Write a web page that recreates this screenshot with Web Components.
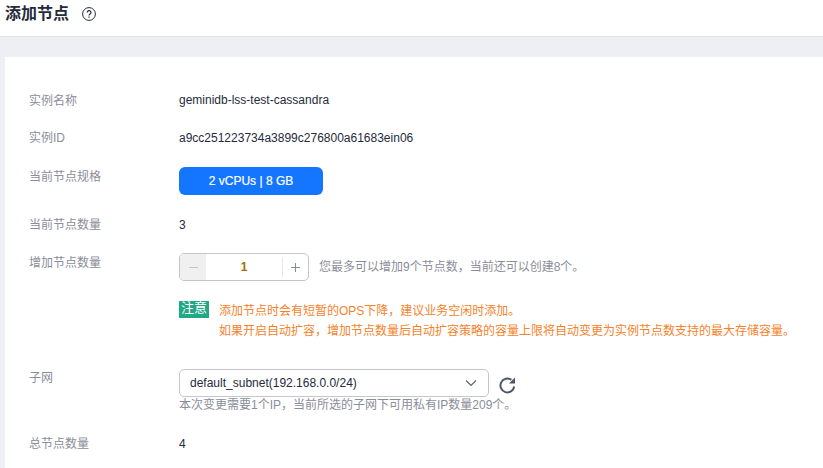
<!DOCTYPE html>
<html>
<head>
<meta charset="utf-8">
<style>
  html, body { margin: 0; height: 468px; overflow: hidden; background: #eeeff4; }
  body { font: 12px "Liberation Sans", "Noto Sans CJK SC", sans-serif; color: #252b3a; }
</style>
</head>
<body>
<page-header>添加节点</page-header>
<form-card>
  <form-row label="实例名称" style="--row-h:37px">geminidb-lss-test-cassandra</form-row>
  <form-row label="实例ID" style="--row-h:38px;--value-top:1px">a9cc251223734a3899c276800a61683ein06</form-row>
  <form-row label="当前节点规格" style="--row-h:49px;--label-top:2px"><spec-pill>2 vCPUs | 8 GB</spec-pill></form-row>
  <form-row label="当前节点数量" style="--row-h:37px;--value-top:1px">3</form-row>
  <form-row label="增加节点数量" style="--row-h:49px;--label-top:2px">
    <step-input value="1"></step-input>
    <span slot="after">您最多可以增加9个节点数，当前还可以创建8个。</span>
  </form-row>
  <notice-box tag="注意">
    <div>添加节点时会有短暂的OPS下降，建议业务空闲时添加。</div>
    <div>如果开启自动扩容，增加节点数量后自动扩容策略的容量上限将自动变更为实例节点数支持的最大存储容量。</div>
  </notice-box>
  <form-row label="子网" style="--row-h:66px">
    <subnet-select value="default_subnet(192.168.0.0/24)" hint="本次变更需要1个IP，当前所选的子网下可用私有IP数量209个。"></subnet-select>
  </form-row>
  <form-row label="总节点数量" style="--row-h:20px;--value-top:1px">4</form-row>
</form-card>
<script>
class PageHeader extends HTMLElement {
  constructor() {
    super();
    this.attachShadow({ mode: 'open' }).innerHTML = `
      <style>
        :host { display: flex; align-items: center; height: 37px; box-sizing: border-box; padding: 0 0 9px 5px; background: #fff; border-bottom: 1px solid #e3e3e6; }
        h1 { margin: 0; font-size: 16px; font-weight: bold; color: #252b3a; line-height: 26px; }
        svg { margin-left: 13px; }
      </style>
      <h1><slot></slot></h1>
      <svg width="14" height="14" viewBox="0 0 14 14" fill="none" stroke="#252b3a">
        <circle cx="7" cy="7" r="6.4"/>
        <path d="M5.2 5.6a1.9 1.9 0 1 1 2.9 1.5c-.7.4-1.1.8-1.1 1.5" stroke-width="1.2"/>
        <path d="M7 9.6v1.2" stroke-width="1.2"/>
      </svg>`;
  }
}
customElements.define('page-header', PageHeader);

class FormCard extends HTMLElement {
  constructor() {
    super();
    this.attachShadow({ mode: 'open' }).innerHTML = `
      <style>
        :host { display: block; margin: 20px 0 0 5px; padding: 33px 0 0 24px; background: #fff; height: 411px; box-sizing: border-box; }
      </style>
      <slot></slot>`;
  }
}
customElements.define('form-card', FormCard);

class FormRow extends HTMLElement {
  constructor() {
    super();
    this.attachShadow({ mode: 'open' }).innerHTML = `
      <style>
        :host { display: flex; height: var(--row-h, 40px); line-height: 20px; }
        .label { width: 150px; flex: none; color: #8a8e99; padding-top: var(--label-top, 1px); }
        .value { display: flex; align-items: flex-start; color: #252b3a; padding-top: var(--value-top, 0); }
        .after { color: #8a8e99; margin-left: 10px; line-height: 28px; margin-top: 2px; }
      </style>
      <div class="label"></div>
      <div class="value"><slot></slot><div class="after"><slot name="after"></slot></div></div>`;
    this.shadowRoot.querySelector('.label').textContent = this.getAttribute('label');
  }
}
customElements.define('form-row', FormRow);

class SpecPill extends HTMLElement {
  constructor() {
    super();
    this.attachShadow({ mode: 'open' }).innerHTML = `
      <style>
        :host { display: block; width: 144px; height: 28px; margin-top: 2px; border-radius: 6px; background: #1476ff; color: #fff; text-align: center; line-height: 28px; -webkit-text-stroke: 0.2px #fff; }
      </style>
      <slot></slot>`;
  }
}
customElements.define('spec-pill', SpecPill);

class StepInput extends HTMLElement {
  constructor() {
    super();
    this.attachShadow({ mode: 'open' }).innerHTML = `
      <style>
        :host { display: flex; width: 130px; height: 28px; margin-top: 2px; box-sizing: border-box; border: 1px solid #c4c6cc; border-radius: 5px; overflow: hidden; line-height: 26px; }
        .minus { display: flex; align-items: center; justify-content: center; width: 26px; background: #f0f0f0; }
        .num { flex: 1; text-align: center; color: #a86d00; font-weight: bold; font-size: 12px; }
        .sep { width: 1px; height: 20px; margin-top: 3px; background: #e6e7ea; }
        .plus { display: flex; align-items: center; justify-content: center; width: 25px; }
      </style>
      <div class="minus"><svg width="9" height="9" viewBox="0 0 9 9" stroke="#c4c6cc"><path d="M0 4.5h9"/></svg></div>
      <div class="num"></div>
      <div class="sep"></div>
      <div class="plus"><svg width="9" height="9" viewBox="0 0 9 9" stroke="#858b9c"><path d="M0 4.5h9M4.5 0v9"/></svg></div>`;
    this.shadowRoot.querySelector('.num').textContent = this.getAttribute('value');
  }
}
customElements.define('step-input', StepInput);

class NoticeBox extends HTMLElement {
  constructor() {
    super();
    this.attachShadow({ mode: 'open' }).innerHTML = `
      <style>
        :host { display: flex; height: 67px; padding: 0 0 0 150px; box-sizing: border-box; }
        .tag { width: 30px; height: 17px; flex: none; margin-top: 1px; background: #22a884; color: #fff; text-align: center; font-size: 13px; line-height: 14px; }
        .body { margin-left: 10px; color: #f5822a; line-height: 20px; margin-top: 1px; }
      </style>
      <div class="tag"></div><div class="body"><slot></slot></div>`;
    this.shadowRoot.querySelector('.tag').textContent = this.getAttribute('tag');
  }
}
customElements.define('notice-box', NoticeBox);

class SubnetSelect extends HTMLElement {
  constructor() {
    super();
    this.attachShadow({ mode: 'open' }).innerHTML = `
      <style>
        :host { display: block; margin-top: 2px; line-height: 16px; }
        .line { display: flex; align-items: flex-start; }
        .box { display: flex; justify-content: space-between; align-items: center; width: 310px; height: 28px; box-sizing: border-box; padding: 0 11px 0 10px; border: 1px solid #c4c6cc; border-radius: 5px; color: #252b3a; }
        .refresh { margin: 7px 0 0 9px; }
        .hint { color: #8a8e99; }
      </style>
      <div class="line">
        <div class="box"><span class="val"></span>
          <svg width="12" height="8" viewBox="0 0 12 8" fill="none" stroke="#5e6570" stroke-width="1.2"><path d="M1 1.5l5 5 5-5"/></svg>
        </div>
        <svg class="refresh" width="18" height="18" viewBox="0 0 18 18" fill="none" stroke="#4c5666" stroke-width="2">
          <path d="M16.2 10.5A6.9 6.9 0 1 1 13.4 3.9"/>
          <path d="M17 1.5v6h-6z" fill="#4c5666" stroke="none"/>
        </svg>
      </div>
      <div class="hint"></div>`;
    this.shadowRoot.querySelector('.val').textContent = this.getAttribute('value');
    this.shadowRoot.querySelector('.hint').textContent = this.getAttribute('hint');
  }
}
customElements.define('subnet-select', SubnetSelect);
</script>
</body>
</html>
